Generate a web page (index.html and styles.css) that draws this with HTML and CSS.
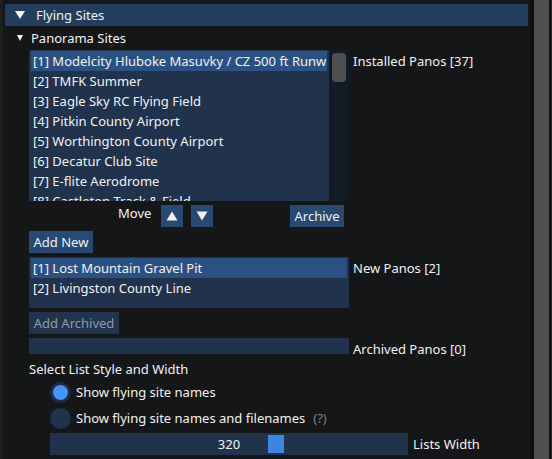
FILE: index.html
```
<!DOCTYPE html>
<html>
<head>
<meta charset="utf-8">
<link rel="stylesheet" href="styles.css">
</head>
<body>
<div class="window">
  <div class="content">
    <div class="header">
      <span class="tri-big"></span>
      <span class="htext">Flying Sites</span>
    </div>
    <div class="tree">
      <span class="tri-small"></span>
      <span class="ttext">Panorama Sites</span>
    </div>

    <div class="row list-row">
      <div class="listbox lb1">
        <div class="items">
          <div class="item sel">[1] Modelcity Hluboke Masuvky / CZ 500 ft Runway</div>
          <div class="item">[2] TMFK Summer</div>
          <div class="item">[3] Eagle Sky RC Flying Field</div>
          <div class="item">[4] Pitkin County Airport</div>
          <div class="item">[5] Worthington County Airport</div>
          <div class="item">[6] Decatur Club Site</div>
          <div class="item">[7] E-flite Aerodrome</div>
          <div class="item">[8] Castleton Track &amp; Field</div>
        </div>
        <div class="lscroll"><div class="lgrab"></div></div>
      </div>
      <div class="label">Installed Panos [37]</div>
    </div>

    <div class="row move-row">
      <div class="move-text">Move</div>
      <div class="btn icon-btn">
        <svg width="12" height="10" viewBox="0 0 12 10"><polygon points="6,0.5 11.5,9.5 0.5,9.5" fill="#f0f0f0"/></svg>
      </div>
      <div class="btn icon-btn down">
        <svg width="12" height="10" viewBox="0 0 12 10"><polygon points="0.5,0.5 11.5,0.5 6,9.5" fill="#f0f0f0"/></svg>
      </div>
      <div class="btn archive">Archive</div>
    </div>

    <div class="row">
      <div class="btn addnew">Add New</div>
    </div>

    <div class="row list-row lr2">
      <div class="listbox lb2">
        <div class="items">
          <div class="item sel">[1] Lost Mountain Gravel Pit</div>
          <div class="item">[2] Livingston County Line</div>
        </div>
      </div>
      <div class="label">New Panos [2]</div>
    </div>

    <div class="row">
      <div class="btn disabled addarch">Add Archived</div>
    </div>

    <div class="row list-row lr3">
      <div class="listbox lb3"></div>
      <div class="label">Archived Panos [0]</div>
    </div>

    <div class="select-text">Select List Style and Width</div>

    <div class="radio-row r1">
      <span class="radio on"><span class="dot"></span></span>
      <span class="rtext">Show flying site names</span>
    </div>
    <div class="radio-row r2">
      <span class="radio"></span>
      <span class="rtext">Show flying site names and filenames</span>
      <span class="help">(?)</span>
    </div>

    <div class="slider-row">
      <div class="slider">
        <span class="sval">320</span>
        <span class="sgrab"></span>
      </div>
      <span class="slabel">Lists Width</span>
    </div>
  </div>
  <div class="vscroll"><div class="vgrab"></div></div>
</div>
</body>
</html>
```

FILE: styles.css
```
* { box-sizing: border-box; }
html, body {
  margin: 0;
  padding: 0;
  background: #151617;
}
body {
  width: 552px;
  height: 459px;
  overflow: hidden;
  font-family: "Noto Sans", "Open Sans", sans-serif;
  font-size: 13px;
  line-height: 16px;
  color: #f2f2f2;
}
.window {
  display: flex;
  height: 459px;
  border-left: 3px solid #1d1e1f;
}
.content {
  width: 528px;
  padding: 4px 0 0 2px;
}
.vscroll {
  width: 21px;
  height: 459px;
  padding: 0 3px;
  background: #0e0f10;
  border-right: 1px solid #2a2a2a;
}
.vgrab {
  width: 15px;
  height: 100%;
  background: #4f4f4f;
}

.header {
  width: 523px;
  height: 22px;
  background: #233e5d;
  display: flex;
  align-items: center;
}
.tri-big {
  width: 0; height: 0;
  margin-left: 10px;
  border-left: 5.5px solid transparent;
  border-right: 5.5px solid transparent;
  border-top: 8px solid #f2f2f2;
}
.htext { margin-left: 11px; }

.tree {
  margin-top: 4px;
  height: 16px;
  display: flex;
  align-items: center;
}
.tri-small {
  width: 0; height: 0;
  margin-left: 12px;
  border-left: 3.5px solid transparent;
  border-right: 3.5px solid transparent;
  border-top: 6px solid #f2f2f2;
}
.ttext { margin-left: 8px; }

.row {
  display: flex;
  margin-left: 24px;
  margin-top: 4px;
}
.listbox {
  width: 320px;
  background: #20324c;
  display: flex;
  overflow: hidden;
}
.items {
  flex: 1;
  padding: 1px 2px;
  overflow: hidden;
}
.item {
  height: 20px;
  line-height: 20px;
  padding-left: 2px;
  white-space: nowrap;
  overflow: hidden;
}
.item.sel { background: #2b5182; }
.lb1 { height: 151px; }
.lb1 .items { padding-right: 2px; }
.lscroll {
  width: 20px;
  height: 100%;
  background: #121a26;
  padding: 3px;
}
.lgrab {
  width: 14px;
  height: 29px;
  background: #4f4f4f;
  border-radius: 4px;
}
.label {
  margin-left: 4px;
  padding-top: 3px;
  white-space: nowrap;
}
.lb2 { height: 51px; }
.lb3 { height: 16px; }

.btn {
  height: 22px;
  background: #274972;
  line-height: 22px;
  padding: 0 4px;
  white-space: nowrap;
}
.move-row { height: 22px; }
.move-text { margin-left: 89px; width: 43px; }
.icon-btn {
  width: 22px;
  display: flex;
  align-items: center;
  justify-content: center;
  padding: 0;
}
.icon-btn.down { margin-left: 8px; }
.archive { margin-left: 77px; width: 54px; text-align: center; padding: 0; }
.addnew { width: 64px; text-align: center; padding: 0; }
.disabled { background: #20354d; color: #939aa3; }
.addarch { width: 90px; text-align: center; padding: 0; }

.select-text {
  margin-left: 24px;
  margin-top: 4px;
}
.radio-row {
  display: flex;
  align-items: center;
  height: 22px;
  margin-left: 45px;
  margin-top: 4px;
}
.radio {
  width: 21px;
  height: 21px;
  border-radius: 50%;
  background: #20324c;
  display: flex;
  align-items: center;
  justify-content: center;
}
.radio.on { background: #1d2c42; }
.dot {
  width: 15px;
  height: 15px;
  border-radius: 50%;
  background: #4296fa;
}
.rtext { margin-left: 5px; }
.help { margin-left: 8px; color: #808080; }

.slider-row {
  display: flex;
  align-items: center;
  margin-left: 45px;
  margin-top: 4px;
  height: 22px;
}
.slider {
  position: relative;
  width: 358px;
  height: 22px;
  background: #20324c;
  display: flex;
  align-items: center;
  justify-content: center;
}
.sgrab {
  position: absolute;
  left: 218px;
  top: 2px;
  width: 16px;
  height: 18px;
  background: #3d85e0;
}
.slabel { margin-left: 5px; }
```
